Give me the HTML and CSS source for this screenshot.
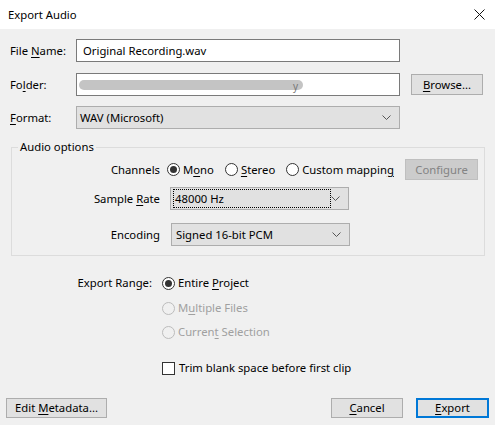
FILE: index.html
```html
<!DOCTYPE html>
<html>
<head>
<meta charset="utf-8">
<link rel="stylesheet" href="styles.css">
</head>
<body>
<div class="dialog">
  <div class="titlebar">
    <span class="title">Export Audio</span>
    <svg class="close" width="11" height="11" viewBox="0 0 11 11"><path d="M0.5 0.5 L10.5 10.5 M10.5 0.5 L0.5 10.5" stroke="#111" stroke-width="1" fill="none"/></svg>
  </div>
  <div class="content">
    <div class="row row-file">
      <label class="lbl">File <u>N</u>ame:</label>
      <div class="input">Original Recording.wav</div>
    </div>
    <div class="row row-folder">
      <label class="lbl">Fo<u>l</u>der:</label>
      <div class="input"><span class="blur"></span><span class="blur-y">y</span></div>
      <button class="btn browse"><u>B</u>rowse...</button>
    </div>
    <div class="row row-format">
      <label class="lbl"><u>F</u>ormat:</label>
      <div class="combo wide"><span>WAV (Microsoft)</span><svg class="chev" width="9" height="5" viewBox="0 0 9 5"><path d="M0.5 0.5 L4.5 4.5 L8.5 0.5" stroke="#555" fill="none"/></svg></div>
    </div>
    <fieldset class="group">
      <legend>Audio options</legend>
      <div class="grow channels">
        <span class="glbl">Channels</span>
        <div class="radios">
          <span class="radio on"><i></i><span>M<u>o</u>no</span></span>
          <span class="radio"><i></i><span><u>S</u>tereo</span></span>
          <span class="radio"><i></i><span>Custom mappin<u>g</u></span></span>
        </div>
        <button class="btn configure">Configure</button>
      </div>
      <div class="grow rate">
        <span class="glbl">Sample <u>R</u>ate</span>
        <div class="combo rate-combo"><span class="focus">48000 Hz</span><svg class="chev" width="9" height="5" viewBox="0 0 9 5"><path d="M0.5 0.5 L4.5 4.5 L8.5 0.5" stroke="#555" fill="none"/></svg></div>
      </div>
      <div class="grow enc">
        <span class="glbl">Encoding</span>
        <div class="combo enc-combo"><span>Signed 16-bit PCM</span><svg class="chev" width="9" height="5" viewBox="0 0 9 5"><path d="M0.5 0.5 L4.5 4.5 L8.5 0.5" stroke="#555" fill="none"/></svg></div>
      </div>
    </fieldset>
    <div class="range">
      <div class="rrow first">
        <span class="rlbl">Export Range:</span>
        <span class="radio on"><i></i><span>Entire <u>P</u>roject</span></span>
      </div>
      <div class="rrow second">
        <span class="rlbl"></span>
        <span class="radio disabled"><i></i><span>M<u>u</u>ltiple Files</span></span>
      </div>
      <div class="rrow third">
        <span class="rlbl"></span>
        <span class="radio disabled"><i></i><span>Curren<u>t</u> Selection</span></span>
      </div>
      <div class="rrow check">
        <span class="rlbl"></span>
        <span class="checkbox"><i></i><span>Trim blank space before first clip</span></span>
      </div>
    </div>
    <div class="buttons">
      <button class="btn meta">Edit <u>M</u>etadata...</button>
      <div class="right">
        <button class="btn cancel"><u>C</u>ancel</button>
        <button class="btn export"><u>E</u>xport</button>
      </div>
    </div>
  </div>
</div>
</body>
</html>
```
FILE: styles.css
```css
* { box-sizing: border-box; }
html, body { margin: 0; padding: 0; }
body {
  width: 495px;
  height: 425px;
  background: #f0f0f0;
  font-family: "Noto Sans", "Liberation Sans", sans-serif;
  font-size: 11.3px;
  line-height: 16px;
  color: #000;
  overflow: hidden;
}
u { text-decoration: underline; text-underline-offset: 2px; }
.titlebar {
  height: 29px;
  background: #fff;
  display: flex;
  align-items: center;
  justify-content: space-between;
  padding: 0 10px 0 8px;
}
.close { display: block; }
.content { padding: 0 0 0 10px; }
.row { display: flex; align-items: center; height: 23px; }
.row-file { margin-top: 10px; }
.row-folder { margin-top: 11px; }
.row-format { margin-top: 10px; }
.lbl { width: 66px; }
.input {
  width: 324px;
  height: 23px;
  background: #fff;
  border: 1px solid #7a7a7a;
  padding: 2px 6px;
  display: flex;
  align-items: center;
  position: relative;
}
.blur {
  display: block;
  width: 224px;
  height: 10px;
  margin-left: -4px;
  background: #c4c4c4;
  border-radius: 5px;
}
.blur-y {
  position: absolute;
  left: 216px;
  top: 4px;
  font-size: 10px;
  color: #777;
}
.btn {
  font-family: inherit;
  font-size: 11.3px;
  line-height: 16px;
  color: #000;
  background: #e1e1e1;
  border: 1px solid #adadad;
  padding: 0;
  margin: 0;
  height: 21px;
}
.browse { width: 72px; margin-left: 11px; }
.combo {
  height: 23px;
  background: #e1e1e1;
  border: 1px solid #adadad;
  display: flex;
  align-items: center;
  justify-content: space-between;
  padding: 0 8px 0 3px;
}
.combo.wide { width: 324px; }
.chev { display: block; }
.group {
  margin: 10px 0 0 1px;
  width: 474px;
  border: 1px solid #dcdcdc;
  padding: 0 6px 9px 0;
}
.group legend {
  margin-left: 6px;
  padding: 0 2px;
  line-height: 16px;
}
.grow { display: flex; align-items: center; }
.glbl { width: 148px; text-align: right; }
.channels { height: 21px; margin-top: 4px; }
.radios { display: flex; gap: 11px; margin-left: 7px; }
.radio, .checkbox { display: inline-flex; align-items: center; }
.radio i {
  display: inline-block;
  width: 13px; height: 13px;
  border: 1px solid #333;
  border-radius: 50%;
  margin-right: 3px;
  position: relative;
  background: #fff;
  flex: none;
}
.radio.on i::after {
  content: "";
  position: absolute;
  left: 2px; top: 2px;
  width: 7px; height: 7px;
  border-radius: 50%;
  background: #333;
}
.radio.disabled { color: #a0a0a0; }
.radio.disabled i { border-color: #bcbcbc; background: #f0f0f0; }
.configure {
  margin-left: auto;
  width: 73px;
  background: #cccccc;
  border-color: #bfbfbf;
  color: #838383;
}
.rate { margin-top: 7px; }
.rate-combo { width: 179px; margin-left: 10px; padding-left: 2px; }
.focus {
  border: 1px dotted #000;
  width: 158px;
  height: 19px;
  line-height: 17px;
  padding-left: 1px;
}
.enc { margin-top: 13px; }
.enc-combo { width: 179px; margin-left: 11px; padding-left: 4px; }
.range { margin-top: 18px; }
.rrow { display: flex; align-items: center; height: 18px; }
.rlbl { width: 142px; text-align: right; margin-right: 10px; }
.second { margin-top: 7px; }
.third { margin-top: 6px; }
.check { margin-top: 18px; }
.checkbox i {
  display: inline-block;
  width: 13px; height: 13px;
  border: 1px solid #333;
  background: #fff;
  margin-right: 4px;
  flex: none;
}
.buttons {
  display: flex;
  justify-content: space-between;
  margin-top: 21px;
  padding-right: 6px;
  margin-left: -4px;
}
.meta { width: 101px; height: 20px; }
.right { display: flex; gap: 13px; }
.cancel { width: 72px; height: 20px; }
.export { width: 73px; height: 20px; border: 2px solid #0078d7; }
```
